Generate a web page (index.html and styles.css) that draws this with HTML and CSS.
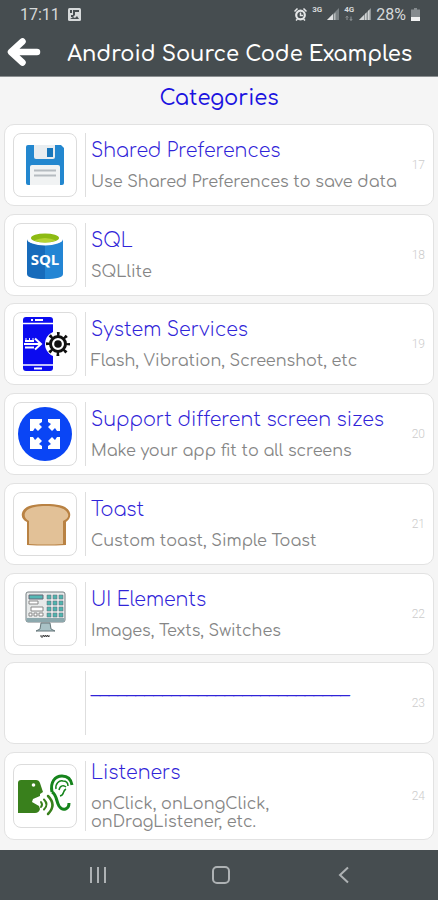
FILE: index.html
```html
<!DOCTYPE html>
<html lang="en">
<head>
  <meta charset="UTF-8">
  <meta name="viewport" content="width=device-width, initial-scale=1">
  <title>Android Source Code Examples</title>
  <link rel="stylesheet" href="styles.css">
</head>
<body>
  <header class="header">
    <div class="status">
      <span class="clock">17:11</span>
      <svg class="status-img" viewBox="0 0 13 13"><rect width="13" height="13" rx="1.5" fill="#d6d9da"/><path d="M2 2h2v3H2zM5 2h6v2H7v3l-2 2H3V7h2zM2 11l3-2 2 1 2-2 2 3z" fill="#464d50"/></svg>
      <div class="status-right">
        <svg class="status-img" viewBox="0 0 13 13"><circle cx="6.5" cy="7" r="4.3" fill="none" stroke="#e4e6e7" stroke-width="2.2"/><path d="M6.5 4.5V7.5H9M.5 3.5l3-3M12.5 3.5l-3-3M2 12.5l1.5-1.5M11 12.5l-1.5-1.5" stroke="#e4e6e7" stroke-width="1.5" fill="none"/></svg>
        <span class="net">3G</span>
        <svg class="signal" viewBox="0 0 12 12"><path d="M0 12L12 0V12z" fill="#798083"/><path d="M0 12l6-6v6z" fill="#e0e2e3"/><path d="M7 12V6l1.5-1.5V12z" fill="#b5babb"/></svg>
        <span class="net">4G<svg class="updown" viewBox="0 0 8 5"><path d="M2 0v4M.8 1.5L2 .3l1.2 1.2M6 .5v4M4.8 3L6 4.5 7.2 3" stroke="#8d9395" fill="none"/></svg></span>
        <svg class="signal" viewBox="0 0 12 12"><path d="M0 12L12 0V12z" fill="#8d9395"/><path d="M0 12l5-5v5zM6 12V6l1.5-1.5V12zM9 12V3l1.5-1.5V12z" fill="#d0d3d4"/></svg>
        <span class="percent">28%</span>
        <svg class="battery" viewBox="0 0 9 13"><path d="M3 0h3v1.5h3V13H0V1.5h3z" fill="#858b8e"/><path d="M0 9h9v4H0z" fill="#f0f1f1"/></svg>
      </div>
    </div>
    <div class="appbar">
      <button class="back" aria-label="Back">
        <svg viewBox="0 0 34 30"><path d="M30 15H6M15.5 4.5L4 15l11.5 10.5" fill="none" stroke="#fff" stroke-width="6.5" stroke-linecap="round" stroke-linejoin="round"/></svg>
      </button>
      <h1>Android Source Code Examples</h1>
    </div>
  </header>

  <main>
    <h2>Categories</h2>
    <ul class="list">
      <li>
        <a class="card" href="#">
          <svg class="icon" viewBox="1 1 62 62">
            <path d="M15 12h33l3 3v35q0 2-2 2H15q-2 0-2-2V14q0-2 2-2z" fill="#2387cf"/>
            <path d="M21 12h21v12q0 2-2 2H23q-2 0-2-2z" fill="#e9edf0"/><path d="M34 15h6v9h-6z" fill="#1876ba"/>
            <path d="M17 34q0-2 2-2h26q2 0 2 2v18H17z" fill="#f1f3f4"/><path d="M21 37.5h22M21 42.5h22" stroke="#b5bbc0" stroke-width="2"/>
          </svg>
          <div class="info"><h3>Shared Preferences</h3><p>Use Shared Preferences to save data</p></div>
          <span class="num">17</span>
        </a>
      </li>
      <li>
        <a class="card" href="#">
          <svg class="icon" viewBox="1 1 62 62">
            <path d="M14 16v35q0 5 18 5V16z" fill="#176bbb"/><path d="M32 16v40q18 0 18-5V16z" fill="#2385d4"/>
            <ellipse cx="32" cy="16" rx="18" ry="6.5" fill="#fff"/><ellipse cx="32" cy="15" rx="14" ry="4.5" fill="#8dbb13"/><path d="M21 17.5q11-5 22 0-11 4-22 0z" fill="#b5d334"/>
            <text class="sql" x="32" y="42" text-anchor="middle">SQL</text>
          </svg>
          <div class="info"><h3>SQL</h3><p>SQLlite</p></div>
          <span class="num">18</span>
        </a>
      </li>
      <li>
        <a class="card" href="#">
          <svg class="icon" viewBox="1 1 62 62">
            <rect x="10" y="5" width="30" height="54" rx="3" fill="#0b0bf0"/>
            <path d="M10 11.5h30M10 53h30" stroke="#fff" stroke-width="1.5"/><path d="M18 8h2M22 8h8M21 56.5h8" stroke="#fff" stroke-width="2"/>
            <circle cx="45" cy="32" r="13" fill="#fff"/>
            <path d="M12 29h9M11 32h17M12 35.5h9M22 26.5l6 5.5-6 5.5" fill="none" stroke="#fff" stroke-width="2"/><path d="M13 26v3M16.5 26v3M20 26v3" stroke="#fff"/>
            <circle cx="45" cy="32" r="7.5" fill="none" stroke="#111" stroke-width="3"/><circle cx="45" cy="32" r="3.8" fill="#111"/>
            <circle cx="45" cy="32" r="10" fill="none" stroke="#111" stroke-width="4" stroke-dasharray="2.6 5.254" stroke-dashoffset="1.3"/>
          </svg>
          <div class="info"><h3>System Services</h3><p>Flash, Vibration, Screenshot, etc</p></div>
          <span class="num">19</span>
        </a>
      </li>
      <li>
        <a class="card" href="#">
          <svg class="icon" viewBox="1 1 62 62">
            <circle cx="32" cy="32" r="27" fill="#0a45f5"/>
            <g fill="#fff">
              <path d="M17 17H29V20L26 22 29 25 25 29 22 26 20 29H17z"/>
              <path d="M17 17H29V20L26 22 29 25 25 29 22 26 20 29H17z" transform="rotate(90 32 32)"/>
              <path d="M17 17H29V20L26 22 29 25 25 29 22 26 20 29H17z" transform="rotate(180 32 32)"/>
              <path d="M17 17H29V20L26 22 29 25 25 29 22 26 20 29H17z" transform="rotate(270 32 32)"/>
            </g>
          </svg>
          <div class="info"><h3>Support different screen sizes</h3><p>Make your app fit to all screens</p></div>
          <span class="num">20</span>
        </a>
      </li>
      <li>
        <a class="card" href="#">
          <svg class="icon" viewBox="1 1 62 62">
            <path d="M14 53V30c-4-2-6-5-5-9 2-7 11-9 24-9s22 2 24 9c1 4-1 7-4 9v23q-20 1-39 0z" fill="#b98243"/>
            <path d="M16 52V29c-4-2-5-5-4-8 2-5 10-7 21-7s20 2 22 8c1 3-1 5-5 7v23q-17 1-34 0z" fill="#e2c197"/>
          </svg>
          <div class="info"><h3>Toast</h3><p>Custom toast, Simple Toast</p></div>
          <span class="num">21</span>
        </a>
      </li>
      <li>
        <a class="card" href="#">
          <svg class="icon" viewBox="1 1 62 62">
            <rect x="13" y="10" width="39" height="30" rx="2" fill="#e7eaea" stroke="#777f82"/>
            <path d="M13.5 36h38v4h-38z" fill="#8ca8ad"/><path d="M28 41h9l1 6 4 2H23l4-2z" fill="#a9c2c6" stroke="#66777b"/>
            <path d="M16 13h14v4H16z" fill="#55b8b5" stroke="#667"/><path d="M16 19h9v3h-9zM18 25h12v4H18zM16 31h3v3h-3zM21 31h3v3h-3zM26 31h4v3h-4z" fill="#fff" stroke="#888"/>
            <g fill="#50b5ae" stroke="#667" stroke-width=".5">
              <path d="M34 13h4v4h-4zM40 13h4v4h-4zM46 13h4v4h-4zM34 19h4v4h-4zM40 19h4v4h-4zM46 19h4v4h-4z"/>
              <path d="M34 25h4v4h-4zM40 25h4v4h-4zM46 25h4v4h-4zM34 31h4v4h-4zM40 31h4v4h-4zM46 31h4v4h-4z"/>
            </g>
            <path d="M28 53v2h2v-2l2 2v-2l2 2v-2l2 2v-2" fill="none" stroke="#444"/>
          </svg>
          <div class="info"><h3>UI Elements</h3><p>Images, Texts, Switches</p></div>
          <span class="num">22</span>
        </a>
      </li>
      <li>
        <a class="card" href="#">
          <div class="icon empty"></div>
          <div class="info"><h3>_____________________________</h3><p>&nbsp;</p></div>
          <span class="num">23</span>
        </a>
      </li>
      <li>
        <a class="card" href="#">
          <svg class="icon" viewBox="1 1 62 62">
            <path d="M5 19q0-3 3-3h15q3 0 4 3l3 9-3 2v2l-7 3-1 3 7 4 1 3q-1 4-5 4H5z" fill="#39801c"/><circle cx="20.5" cy="21" r="1.8" fill="#fff"/>
            <g fill="none" stroke="#39801c" stroke-width="2" stroke-linecap="round"><path d="M28 38q2 2.500 0 5M31 35.5q5 5 0 10"/><path d="M35 32q9 9 0 18" stroke-width="2.5"/></g>
            <path d="M39 28C37 18 42 12 49 12c5 0 9 3 10 9M39 28c5 3 4 9 7 14 4 6 10 3 10-3" fill="none" stroke="#16841c" stroke-width="3"/>
            <path d="M43 25c-1-5 3-9 7-8 4 0 5 3 5 5M47 32c5-1 2-5 6-7M46 26c1-5 5-5 7-3" fill="none" stroke="#16841c" stroke-width="1.5"/>
          </svg>
          <div class="info"><h3>Listeners</h3><p>onClick, onLongClick,<br>onDragListener, etc.</p></div>
          <span class="num">24</span>
        </a>
      </li>
    </ul>
  </main>

  <nav class="navbar">
    <button aria-label="Recent apps"><svg viewBox="0 0 20 20"><path d="M3 2v16M10 2v16M17 2v16" fill="none" stroke="#aeb2b4" stroke-width="2"/></svg></button>
    <button aria-label="Home"><svg viewBox="0 0 20 20"><rect x="2" y="2" width="16" height="16" rx="4" fill="none" stroke="#aeb2b4" stroke-width="2"/></svg></button>
    <button aria-label="Go back"><svg viewBox="0 0 20 20"><path d="M14 2.5L6 10l8 7.5" fill="none" stroke="#aeb2b4" stroke-width="2"/></svg></button>
  </nav>
</body>
</html>
```
FILE: styles.css
```css
* {
  box-sizing: border-box;
}

body {
  margin: 0;
  min-height: 100vh;
  display: flex;
  flex-direction: column;
  background: #f5f5f5;
  font-family: Comfortaa, Quicksand, Inter, sans-serif;
}

h1, h2, h3, p, ul {
  margin: 0;
  padding: 0;
}

button {
  border: none;
  padding: 0;
  background: none;
  cursor: pointer;
}

svg {
  display: block;
}

.header {
  background: #464d50;
  color: white;
  border-bottom: 1px solid #8b8f91;
}

.status {
  display: flex;
  align-items: center;
  gap: 8px;
  height: 28px;
  padding: 0 18px 0 20px;
  font-family: Roboto, sans-serif;
  font-size: 16px;
  color: #d6d9da;
}

.status-img {
  width: 13px;
  height: 13px;
}

.status-right {
  margin-left: auto;
  display: flex;
  align-items: center;
  gap: 5px;
}

.net {
  height: 16px;
  font-size: 8px;
  font-weight: bold;
  line-height: 8px;
}

.updown {
  width: 8px;
  height: 5px;
  margin: 2px auto;
}

.signal {
  width: 12px;
  height: 12px;
}

.battery {
  width: 9px;
  height: 13px;
}

.appbar {
  display: flex;
  align-items: center;
  height: 48px;
  padding: 0 26px 0 6px;
}

.back svg {
  width: 36px;
  height: 30px;
}

h1 {
  flex: 1;
  padding-top: 4px;
  text-align: right;
  font-size: 21px;
  font-weight: 600;
  line-height: 30px;
  white-space: nowrap;
}

main {
  flex: 1;
  display: flex;
  flex-direction: column;
  padding: 0 4px 10px 4px;
}

h2 {
  padding: 6px 0 11px;
  text-align: center;
  font-size: 21px;
  font-weight: 500;
  line-height: 30px;
  color: #1a12e0;
}

.list {
  flex: 1;
  display: flex;
  flex-direction: column;
  justify-content: space-between;
  list-style: none;
}

.card {
  display: flex;
  align-items: center;
  padding: 8px;
  border: 1px solid #e2e2e2;
  border-radius: 10px;
  background: white;
  text-decoration: none;
}

.icon {
  width: 64px;
  height: 64px;
  border: 1px solid #dcdcdc;
  border-radius: 8px;
}

.empty {
  border-color: transparent;
}

.sql {
  font-family: "Open Sans", sans-serif;
  font-size: 15px;
  font-weight: bold;
  fill: white;
}

.info {
  flex: 1;
  display: flex;
  flex-direction: column;
  justify-content: center;
  gap: 10px;
  min-height: 64px;
  margin-left: 8px;
  padding-left: 5px;
  border-left: 1px solid #dedede;
}

h3 {
  font-size: 19px;
  font-weight: 300;
  line-height: 24px;
  color: #3024d8;
}

p {
  font-size: 16px;
  font-weight: 400;
  line-height: 18px;
  color: #858585;
}

.num {
  font-family: Roboto, sans-serif;
  font-size: 12px;
  font-weight: 300;
  color: #cccccc;
}

.navbar {
  display: flex;
  justify-content: center;
  align-items: center;
  gap: 103px;
  height: 50px;
  padding-left: 4px;
  background: #464d50;
}

.navbar svg {
  width: 20px;
  height: 20px;
}
```
